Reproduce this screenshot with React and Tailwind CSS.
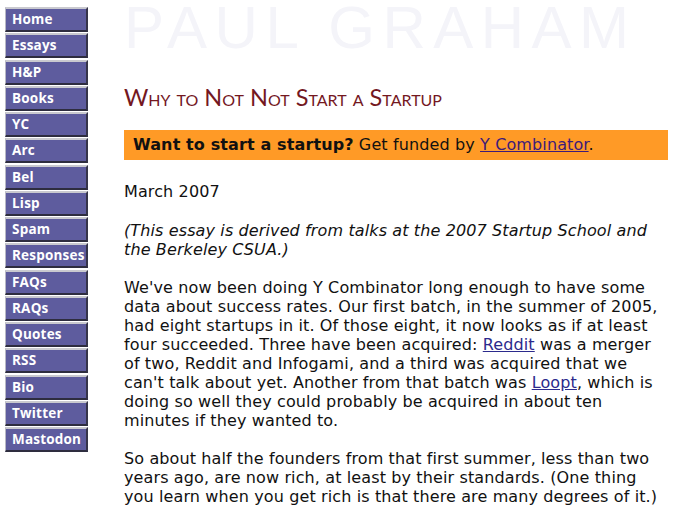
import React from 'react';

const navItems = [
  'Home', 'Essays', 'H&P', 'Books', 'YC', 'Arc', 'Bel', 'Lisp', 'Spam',
  'Responses', 'FAQs', 'RAQs', 'Quotes', 'RSS', 'Bio', 'Twitter', 'Mastodon',
];

function NavButton({ label }) {
  return (
    <a
      href="#"
      className="block w-[83px] h-[25px] mb-[1.25px] bg-[#5e5c9e] border-t-2 border-l border-b-2 border-r-2 border-t-[#c9c9cf] border-l-[#b8b8c4] border-b-[#2e2d3f] border-r-[#36354a] pl-[6px] text-[13.5px] leading-[20px] font-bold text-white tracking-[0.2px]"
      style={{ fontFamily: '"Open Sans", "DejaVu Sans", sans-serif' }}
    >
      {label}
    </a>
  );
}

export default function App() {
  return (
    <div className="flex bg-white min-h-[515px] w-[685px] overflow-hidden">
      <div className="w-[88px] shrink-0 pl-[5px] pt-[7px]">
        {navItems.map((item) => (
          <NavButton key={item} label={item} />
        ))}
      </div>

      <div
        className="pl-[36px] w-[597px] text-[16px] leading-[19px] text-[#111] tracking-[0.12px]"
        style={{ fontFamily: '"DejaVu Sans", Verdana, sans-serif' }}
      >
        <div
          className="h-[56px] text-[60px] leading-[56px] text-[#f4f4f9] tracking-[7.5px] whitespace-nowrap"
          style={{ fontFamily: '"Liberation Sans", Arial, sans-serif' }}
        >
          PAUL GRAHAM
        </div>

        <h1
          className="mt-[29px] text-[23.5px] leading-[24px] text-[#74181f] tracking-normal whitespace-nowrap"
          style={{ fontFamily: 'Lato, "Open Sans", sans-serif', fontVariant: 'small-caps' }}
        >
          Why to Not Not Start a Startup
        </h1>

        <div className="mt-[21px] w-[544px] h-[30px] bg-[#ff9a26] pl-[9px] leading-[30px]">
          <b>Want to start a startup?</b> Get funded by{' '}
          <a href="#" className="underline text-[#3d1a7a]">Y Combinator</a>.
        </div>

        <p className="mt-[22px]">March 2007</p>

        <p className="mt-[20px] italic">
          (This essay is derived from talks at the 2007 Startup School and
          <br />
          the Berkeley CSUA.)
        </p>

        <p className="mt-[19px]">
          We've now been doing Y Combinator long enough to have some
          <br />
          data about success rates. Our first batch, in the summer of 2005,
          <br />
          had eight startups in it. Of those eight, it now looks as if at least
          <br />
          four succeeded. Three have been acquired:{' '}
          <a href="#" className="underline text-[#2b2a8c]">Reddit</a> was a merger
          <br />
          of two, Reddit and Infogami, and a third was acquired that we
          <br />
          can't talk about yet. Another from that batch was{' '}
          <a href="#" className="underline text-[#2b2a8c]">Loopt</a>, which is
          <br />
          doing so well they could probably be acquired in about ten
          <br />
          minutes if they wanted to.
        </p>

        <p className="mt-[19px]">
          So about half the founders from that first summer, less than two
          <br />
          years ago, are now rich, at least by their standards. (One thing
          <br />
          you learn when you get rich is that there are many degrees of it.)
        </p>
      </div>
    </div>
  );
}
